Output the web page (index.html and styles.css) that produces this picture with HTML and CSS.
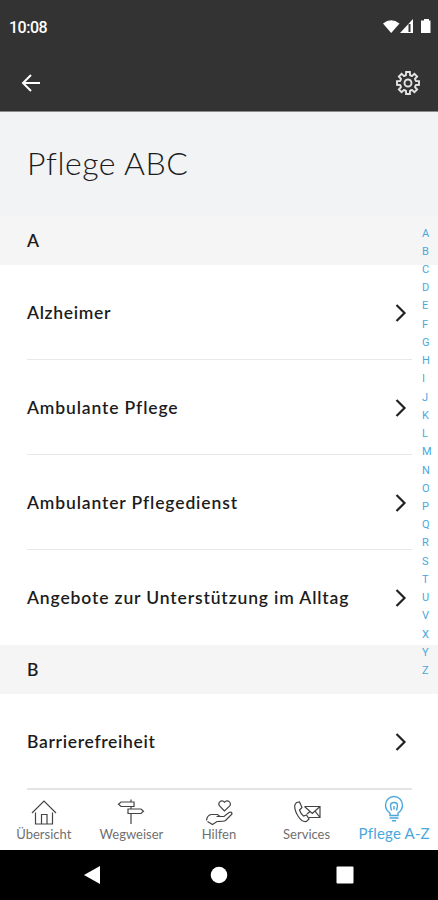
FILE: index.html
```html
<!DOCTYPE html>
<html lang="de">
<head>
  <meta charset="UTF-8" />
  <meta name="viewport" content="width=device-width, initial-scale=1.0"/>
  <title>Pflege ABC</title>
  <link rel="stylesheet" href="styles.css">
</head>
<body>
  <div class="phone">
    <header class="topbar">
      <div class="status">
        <span class="time">10:08</span>
        <svg class="status-icons" width="50" height="18" viewBox="0 0 50 18">
          <path d="M1 5.500Q9 -1 17.500 5.500L9.200 15z"/>
          <path d="M31 1V15H18z"/>
          <path class="gap" d="M27.500 6v8"/>
          <path d="M40 2.500h2V1h5v1.500h1.500V15H39V2.500z"/>
        </svg>
      </div>
      <div class="actions">
        <svg class="back" width="20" height="18" viewBox="0 0 20 18"><path d="M19 9H2M10 1L2 9l8 8"/></svg>
        <svg class="gear" width="26" height="26" viewBox="-13 -13 26 26">
          <path d="M-2-8L-1.900-11H1.900L2-8Q3-7 4.240-7.070L6.430-9.120L9.120-6.430L7.070-4.240Q7-3 8-2L11-1.900V1.900L8 2Q7 3 7.070 4.240L9.120 6.430L6.430 9.120L4.240 7.070Q3 7 2 8L1.900 11H-1.900L-2 8Q-3 7-4.240 7.070L-6.430 9.120L-9.120 6.430L-7.070 4.240Q-7 3-8 2L-11 1.900V-1.900L-8-2Q-7-3-7.070-4.240L-9.120-6.430L-6.430-9.120L-4.240-7.070Q-3-7-2-8z"/>
          <circle r="3.500"/>
        </svg>
      </div>
    </header>

    <main class="content">
      <h1 class="title">Pflege ABC</h1>
      <h2 class="letter">A</h2>
      <ul class="list">
        <li class="row tight"><span>Alzheimer</span><svg class="chevron" width="12" height="20" viewBox="0 0 12 20"><path d="M1.500 2L9.500 10l-8 8"/></svg></li>
        <li class="row"><span>Ambulante Pflege</span><svg class="chevron" width="12" height="20" viewBox="0 0 12 20"><path d="M1.500 2L9.500 10l-8 8"/></svg></li>
        <li class="row"><span>Ambulanter Pflegedienst</span><svg class="chevron" width="12" height="20" viewBox="0 0 12 20"><path d="M1.500 2L9.500 10l-8 8"/></svg></li>
        <li class="row last"><span>Angebote zur Unterstützung im Alltag</span><svg class="chevron" width="12" height="20" viewBox="0 0 12 20"><path d="M1.500 2L9.500 10l-8 8"/></svg></li>
      </ul>
      <h2 class="letter">B</h2>
      <ul class="list">
        <li class="row tight edge"><span>Barrierefreiheit</span><svg class="chevron" width="12" height="20" viewBox="0 0 12 20"><path d="M1.500 2L9.500 10l-8 8"/></svg></li>
      </ul>

      <div class="index">
        <span>A</span><span>B</span><span>C</span><span>D</span><span>E</span>
        <span>F</span><span>G</span><span>H</span><span>I</span><span>J</span>
        <span>K</span><span>L</span><span>M</span><span>N</span><span>O</span>
        <span>P</span><span>Q</span><span>R</span><span>S</span><span>T</span>
        <span>U</span><span>V</span><span>X</span><span>Y</span><span>Z</span>
      </div>
    </main>

    <nav class="tabs">
      <a class="tab">
        <svg width="28" height="28" viewBox="0 0 28 28"><path d="M2 15L14 3l12 12M5.500 14.500V26h17V14.500M11.500 26V16.500h5.500V26"/></svg>
        <span>Übersicht</span>
      </a>
      <a class="tab">
        <svg width="28" height="28" viewBox="0 0 28 28"><path d="M14 1.500V4M14 8.500V11M14 15.500V26M4 4h13v4.500H4L1.500 6.200zM11 11h13l2.500 2.200L24 15.500H11z"/></svg>
        <span>Wegweiser</span>
      </a>
      <a class="tab">
        <svg width="28" height="28" viewBox="0 0 28 28"><path d="M19.500 13L14.800 8.200C12 5 16.500.500 19.500 4.200C22.500.500 27.500 5 24.500 8.200z"/><path d="M1.500 22.500Q2 17.500 6 16.500H12.500L15 18.500H11.500M15 18.500H19L24 14.500Q27 13.500 27 16L20.500 22.500Q19 23.500 12 23.500L7.500 26.500L2.500 23.500"/></svg>
        <span>Hilfen</span>
      </a>
      <a class="tab">
        <svg width="28" height="28" viewBox="0 0 28 28"><path d="M3.500 4.500L6.500 4L9 9.500L6.500 12Q8 16.500 10.500 18L13.500 17L16 21L13.500 23.500Q9 24.500 5 18T1.800 7z"/><path d="M11.500 8.500H27V19.500H16M11.500 8.500L19.300 15.500L27 8.500M22 13.200l5 6.300M17 13.500l-3 2.500"/></svg>
        <span>Services</span>
      </a>
      <a class="tab active">
        <svg width="28" height="28" viewBox="0 0 28 28"><path d="M10 20.500V18Q5.500 15 5.500 10A8.500 8.500 0 0 1 22.500 10Q22.500 15 18 18V20.500zM9.500 23h9M12 25.700h4M11.500 15.500L10.500 11Q10.500 7.500 14 7.500T17.500 11L16.500 15.500M14 11v3.500"/></svg>
        <span>Pflege A-Z</span>
      </a>
    </nav>

    <div class="navbar">
      <svg width="18" height="20" viewBox="0 0 18 20"><path d="M17 1v18L1 10z"/></svg>
      <svg width="18" height="20" viewBox="0 0 18 20"><circle cx="9" cy="10" r="8.300"/></svg>
      <svg width="18" height="20" viewBox="0 0 18 20"><rect x=".5" y="1.500" width="17" height="17" rx="1"/></svg>
    </div>
  </div>
</body>
</html>
```
FILE: styles.css
```css
:root {
  --dark: #333333;
  --blue: #4aa8dc;
  --line: #eeeeee;
}

* {
  box-sizing: border-box;
}

html, body {
  margin: 0;
  padding: 0;
  height: 100%;
  overflow: hidden;
  font-family: Lato, sans-serif;
  color: #1c1c1c;
}

.phone {
  display: flex;
  flex-direction: column;
  height: 100vh;
  background: #fff;
}

.topbar {
  height: 112px;
  flex: none;
  background: var(--dark);
  border-bottom: 1px solid #8a8b8c;
}

.status {
  display: flex;
  justify-content: space-between;
  align-items: center;
  height: 54px;
  padding: 0 6px 0 9px;
}

.time {
  font: 500 16px Roboto, sans-serif;
  letter-spacing: -0.5px;
  color: #fff;
}

.status-icons {
  fill: #fff;
}

.status-icons .gap {
  stroke: var(--dark);
  stroke-width: 2;
}

.actions {
  display: flex;
  justify-content: space-between;
  align-items: center;
  height: 57px;
  padding: 0 17px 0 21px;
}

.actions svg {
  fill: none;
  stroke: #fff;
  stroke-width: 2;
}

.actions .gear {
  stroke: #e4e4e4;
  stroke-width: 1.900;
}

.content {
  position: relative;
  flex: 1;
  min-height: 0;
  overflow: hidden;
}

.title {
  display: flex;
  align-items: center;
  height: 104px;
  margin: 0;
  padding: 0 27px 3px;
  font-size: 32px;
  font-weight: 300;
  letter-spacing: 0.5px;
  background: #f1f3f5;
}

.letter {
  display: flex;
  align-items: center;
  height: 49px;
  margin: 0;
  padding: 0 27px 1px;
  font-size: 17.500px;
  font-weight: 600;
  background: #f5f5f5;
}

.list {
  margin: 0;
  padding: 0 26px 0 27px;
  list-style: none;
}

.row {
  display: flex;
  justify-content: space-between;
  align-items: center;
  height: 95px;
  padding-top: 1px;
  border-bottom: 1px solid #e8e8e8;
  font-size: 17.500px;
  font-weight: 600;
  letter-spacing: 0.860px;
}

.row.tight {
  letter-spacing: 0.680px;
}

.row.last {
  border-bottom-color: transparent;
}

.row.edge {
  height: 96px;
  border-bottom: 2px solid #e4e4e4;
}

.chevron {
  margin-right: 5px;
  fill: none;
  stroke: #222;
  stroke-width: 2.200;
}

/* A-Z quick jump over the list */
.index {
  position: absolute;
  top: 112.500px;
  left: 422px;
  display: flex;
  flex-direction: column;
  font: 11px/18.230px Roboto, sans-serif;
  color: var(--blue);
}

.tabs {
  display: flex;
  flex: none;
  height: 60px;
  background: #fff;
}

.tab {
  display: flex;
  flex: 1 1 0;
  flex-direction: column;
  align-items: center;
  padding-top: 8px;
  font-size: 13px;
  line-height: 16px;
  color: #707070;
  white-space: nowrap;
}

.tab svg {
  flex: none;
  fill: none;
  stroke: #444;
  stroke-width: 1.200;
}

.tab.active {
  padding-top: 5px;
  font-size: 15px;
  line-height: 20px;
  letter-spacing: 0.2px;
  color: var(--blue);
}

.tab.active svg {
  stroke: var(--blue);
  stroke-width: 1.400;
}

.navbar {
  display: flex;
  flex: none;
  justify-content: space-between;
  align-items: center;
  height: 50px;
  padding: 0 84px 0 83px;
  background: #000;
}

.navbar svg {
  fill: #fff;
}
```
